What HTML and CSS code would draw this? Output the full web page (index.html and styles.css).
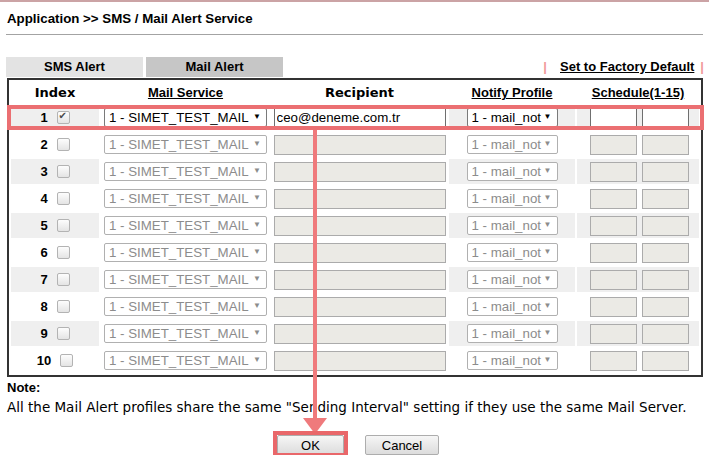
FILE: index.html
```html
<!DOCTYPE html>
<html lang="en">

<head>
    <meta charset="UTF-8">
    <meta name="viewport" content="width=device-width, initial-scale=1.0">
    <title>SMS / Mail Alert Service</title>
    <link rel="stylesheet" href="styles.css">
</head>

<body>
    <div class="topline"></div>
    <div class="page">
        <h1 class="title">Application &gt;&gt; SMS / Mail Alert Service</h1>

        <div class="bar">
            <div class="tabs">
                <span class="tab">SMS Alert</span>
                <span class="tab active">Mail Alert</span>
            </div>
            <div class="links">
                <span class="pipe">|</span>
                <a href="#">Set to Factory Default</a>
                <span class="pipe">|</span>
            </div>
        </div>

        <table class="alerts">
            <colgroup>
                <col class="c-index">
                <col class="c-service">
                <col class="c-recipient">
                <col class="c-profile">
                <col class="c-schedule">
            </colgroup>
            <tr>
                <th class="wide">Index</th>
                <th><u>Mail Service</u></th>
                <th class="wide">Recipient</th>
                <th><u>Notify Profile</u></th>
                <th><u>Schedule(1-15)</u></th>
            </tr>
            <tr class="odd">
                <td class="idx"><b>1</b><input type="checkbox" checked></td>
                <td><span class="sel wide-sel"><select><option>1 - SIMET_TEST_MAIL</option></select></span></td>
                <td><input type="text" class="mail" value="ceo@deneme.com.tr"></td>
                <td class="prof"><span class="sel"><select><option>1 - mail_not</option></select></span></td>
                <td class="sch"><div class="sched"><input type="text"><input type="text"></div></td>
            </tr>
            <tr>
                <td class="idx"><b>2</b><input type="checkbox"></td>
                <td><span class="sel wide-sel off"><select disabled><option>1 - SIMET_TEST_MAIL</option></select></span></td>
                <td><input type="text" class="mail" disabled></td>
                <td class="prof"><span class="sel off"><select disabled><option>1 - mail_not</option></select></span></td>
                <td class="sch"><div class="sched"><input type="text" disabled><input type="text" disabled></div></td>
            </tr>
            <tr class="odd">
                <td class="idx"><b>3</b><input type="checkbox"></td>
                <td><span class="sel wide-sel off"><select disabled><option>1 - SIMET_TEST_MAIL</option></select></span></td>
                <td><input type="text" class="mail" disabled></td>
                <td class="prof"><span class="sel off"><select disabled><option>1 - mail_not</option></select></span></td>
                <td class="sch"><div class="sched"><input type="text" disabled><input type="text" disabled></div></td>
            </tr>
            <tr>
                <td class="idx"><b>4</b><input type="checkbox"></td>
                <td><span class="sel wide-sel off"><select disabled><option>1 - SIMET_TEST_MAIL</option></select></span></td>
                <td><input type="text" class="mail" disabled></td>
                <td class="prof"><span class="sel off"><select disabled><option>1 - mail_not</option></select></span></td>
                <td class="sch"><div class="sched"><input type="text" disabled><input type="text" disabled></div></td>
            </tr>
            <tr class="odd">
                <td class="idx"><b>5</b><input type="checkbox"></td>
                <td><span class="sel wide-sel off"><select disabled><option>1 - SIMET_TEST_MAIL</option></select></span></td>
                <td><input type="text" class="mail" disabled></td>
                <td class="prof"><span class="sel off"><select disabled><option>1 - mail_not</option></select></span></td>
                <td class="sch"><div class="sched"><input type="text" disabled><input type="text" disabled></div></td>
            </tr>
            <tr>
                <td class="idx"><b>6</b><input type="checkbox"></td>
                <td><span class="sel wide-sel off"><select disabled><option>1 - SIMET_TEST_MAIL</option></select></span></td>
                <td><input type="text" class="mail" disabled></td>
                <td class="prof"><span class="sel off"><select disabled><option>1 - mail_not</option></select></span></td>
                <td class="sch"><div class="sched"><input type="text" disabled><input type="text" disabled></div></td>
            </tr>
            <tr class="odd">
                <td class="idx"><b>7</b><input type="checkbox"></td>
                <td><span class="sel wide-sel off"><select disabled><option>1 - SIMET_TEST_MAIL</option></select></span></td>
                <td><input type="text" class="mail" disabled></td>
                <td class="prof"><span class="sel off"><select disabled><option>1 - mail_not</option></select></span></td>
                <td class="sch"><div class="sched"><input type="text" disabled><input type="text" disabled></div></td>
            </tr>
            <tr>
                <td class="idx"><b>8</b><input type="checkbox"></td>
                <td><span class="sel wide-sel off"><select disabled><option>1 - SIMET_TEST_MAIL</option></select></span></td>
                <td><input type="text" class="mail" disabled></td>
                <td class="prof"><span class="sel off"><select disabled><option>1 - mail_not</option></select></span></td>
                <td class="sch"><div class="sched"><input type="text" disabled><input type="text" disabled></div></td>
            </tr>
            <tr class="odd">
                <td class="idx"><b>9</b><input type="checkbox"></td>
                <td><span class="sel wide-sel off"><select disabled><option>1 - SIMET_TEST_MAIL</option></select></span></td>
                <td><input type="text" class="mail" disabled></td>
                <td class="prof"><span class="sel off"><select disabled><option>1 - mail_not</option></select></span></td>
                <td class="sch"><div class="sched"><input type="text" disabled><input type="text" disabled></div></td>
            </tr>
            <tr>
                <td class="idx"><b>10</b><input type="checkbox"></td>
                <td><span class="sel wide-sel off"><select disabled><option>1 - SIMET_TEST_MAIL</option></select></span></td>
                <td><input type="text" class="mail" disabled></td>
                <td class="prof"><span class="sel off"><select disabled><option>1 - mail_not</option></select></span></td>
                <td class="sch"><div class="sched"><input type="text" disabled><input type="text" disabled></div></td>
            </tr>
        </table>

        <div class="note">
            <div class="note-title">Note:</div>
            <div class="note-text">All the Mail Alert profiles share the same "Sending Interval" setting if they use the same Mail Server.</div>
        </div>

        <div class="actions">
            <button type="submit" class="btn ok">OK</button>
            <button type="button" class="btn cancel">Cancel</button>
        </div>
    </div>

    <!-- anotacoes em vermelho por cima da tela -->
    <svg class="marks" width="709" height="470" viewBox="0 0 709 470">
        <rect x="9" y="107" width="693" height="21" fill="none" stroke="#eb6f72" stroke-width="4" />
        <line x1="315" y1="130" x2="315" y2="420" stroke="#ef7a7c" stroke-width="4" />
        <polygon points="303,418 327,418 315,434" fill="#ef7a7c" />
        <rect x="275" y="433" width="71" height="22" fill="none" stroke="#e9676a" stroke-width="4" />
    </svg>
</body>

</html>
```

FILE: styles.css
```css
body {
    margin: 0;
    padding: 0;
    background-color: #fff;
    color: #000;
    font-family: "Liberation Sans", Arial, sans-serif;
    font-size: 13px;
    position: relative;
}

.topline {
    height: 2px;
    background-color: #cba3a5;
}

.page {
    padding: 0 6px;
}

.title {
    margin: 0;
    padding: 9px 1px 7px;
    font-size: 13.3px;
    line-height: 16px;
    font-weight: bold;
    border-bottom: 1px solid #a3a3a3;
}

.bar {
    margin-top: 22px;
    display: flex;
    justify-content: space-between;
    align-items: flex-end;
    width: 698px;
}

.tabs {
    display: flex;
    gap: 3px;
}

.tab {
    width: 137px;
    height: 20px;
    line-height: 20px;
    text-align: center;
    font-weight: bold;
    background-color: #e3e3e3;
}

.tab.active {
    background-color: #c6c6c6;
}

.links {
    display: flex;
    align-items: center;
    line-height: 16px;
    padding-bottom: 2px;
}

.links a {
    color: #000;
    font-weight: bold;
    text-decoration: underline;
    margin: 0 6px 0 13px;
}

.pipe {
    color: #f19a9b;
    font-weight: bold;
}

.alerts {
    margin: 1px 0 0 1px;
    width: 696px;
    table-layout: fixed;
    border: 2px solid #333;
    border-spacing: 2px;
}

.c-index { width: 88px; }
.c-service { width: 169px; }
.c-recipient { width: 175px; }
.c-profile { width: 126px; }
.c-schedule { width: 122px; }

.alerts th {
    height: 21px;
    padding: 0;
    font-size: 13px;
    font-weight: bold;
}

.alerts th.wide {
    font-family: "DejaVu Sans", Verdana, sans-serif;
}

.alerts td {
    height: 25px;
    padding: 0;
    text-align: center;
    vertical-align: middle;
}

.alerts tr.odd .idx,
.alerts tr.odd .prof,
.alerts tr.odd .sch {
    background-color: #efefef;
}

.idx b {
    font-size: 13px;
}

.idx input[type="checkbox"] {
    appearance: none;
    -webkit-appearance: none;
    width: 13px;
    height: 13px;
    margin: 0 0 0 9px;
    border: 1px solid #b3b3b3;
    border-radius: 2px;
    background: linear-gradient(#fdfdfd, #e4e4e4);
    vertical-align: -2px;
    position: relative;
}

.idx input[type="checkbox"]:checked::after {
    content: "\2714";
    position: absolute;
    left: 1px;
    top: -2px;
    font-size: 10px;
    color: #4a4a4a;
    font-family: "DejaVu Sans", sans-serif;
}

.sel {
    display: inline-block;
    position: relative;
    vertical-align: middle;
}

.sel select {
    appearance: none;
    -webkit-appearance: none;
    width: 91px;
    height: 19px;
    margin: 0;
    padding: 0 0 0 4px;
    border: 1px solid #7a7a7a;
    border-radius: 2px;
    background-color: #fff;
    color: #000;
    font-family: "Liberation Sans", Arial, sans-serif;
    font-size: 13.3px;
    opacity: 1;
}

.sel.wide-sel select {
    width: 163px;
}

.sel::after {
    content: "\25BC";
    position: absolute;
    right: 6px;
    top: 5px;
    font-size: 8px;
    line-height: 8px;
    color: #000;
    pointer-events: none;
}

.sel.off select {
    border-color: #b0b0b0;
    color: #8c8c8c;
}

.sel.off::after {
    color: #8c8c8c;
}

input.mail {
    box-sizing: border-box;
    width: 172px;
    height: 20px;
    margin: 0;
    padding: 0 2px;
    border: 1px solid #6f6f6f;
    background-color: #fff;
    font-family: "Liberation Sans", Arial, sans-serif;
    font-size: 13.3px;
    color: #000;
    vertical-align: middle;
}

.sched {
    display: flex;
    justify-content: center;
    gap: 5px;
    padding-left: 2px;
}

.sched input {
    box-sizing: border-box;
    width: 47px;
    height: 20px;
    margin: 0;
    padding: 0 2px;
    border: 1px solid #6f6f6f;
    background-color: #fff;
}

input:disabled {
    background-color: #ebeae5;
    border-color: #ababab;
}

.note {
    margin-top: 3px;
    padding-left: 1px;
}

.note-title {
    font-weight: bold;
    line-height: 16px;
}

.note-text {
    margin-top: 3px;
    line-height: 16px;
    font-family: "DejaVu Sans", Verdana, sans-serif;
    font-size: 13.5px;
}

.actions {
    margin-top: 20px;
    padding-left: 7px;
    display: flex;
    justify-content: center;
    gap: 21px;
}

.btn {
    height: 20px;
    padding: 0;
    border: 1px solid #adadad;
    border-radius: 2px;
    background: linear-gradient(#f6f6f6, #dcdcdc);
    font-family: "Liberation Sans", Arial, sans-serif;
    font-size: 13px;
    color: #000;
    cursor: pointer;
}

.btn.ok {
    width: 67px;
}

.btn.cancel {
    width: 74px;
}

.marks {
    position: absolute;
    top: 0;
    left: 0;
    pointer-events: none;
}
```
